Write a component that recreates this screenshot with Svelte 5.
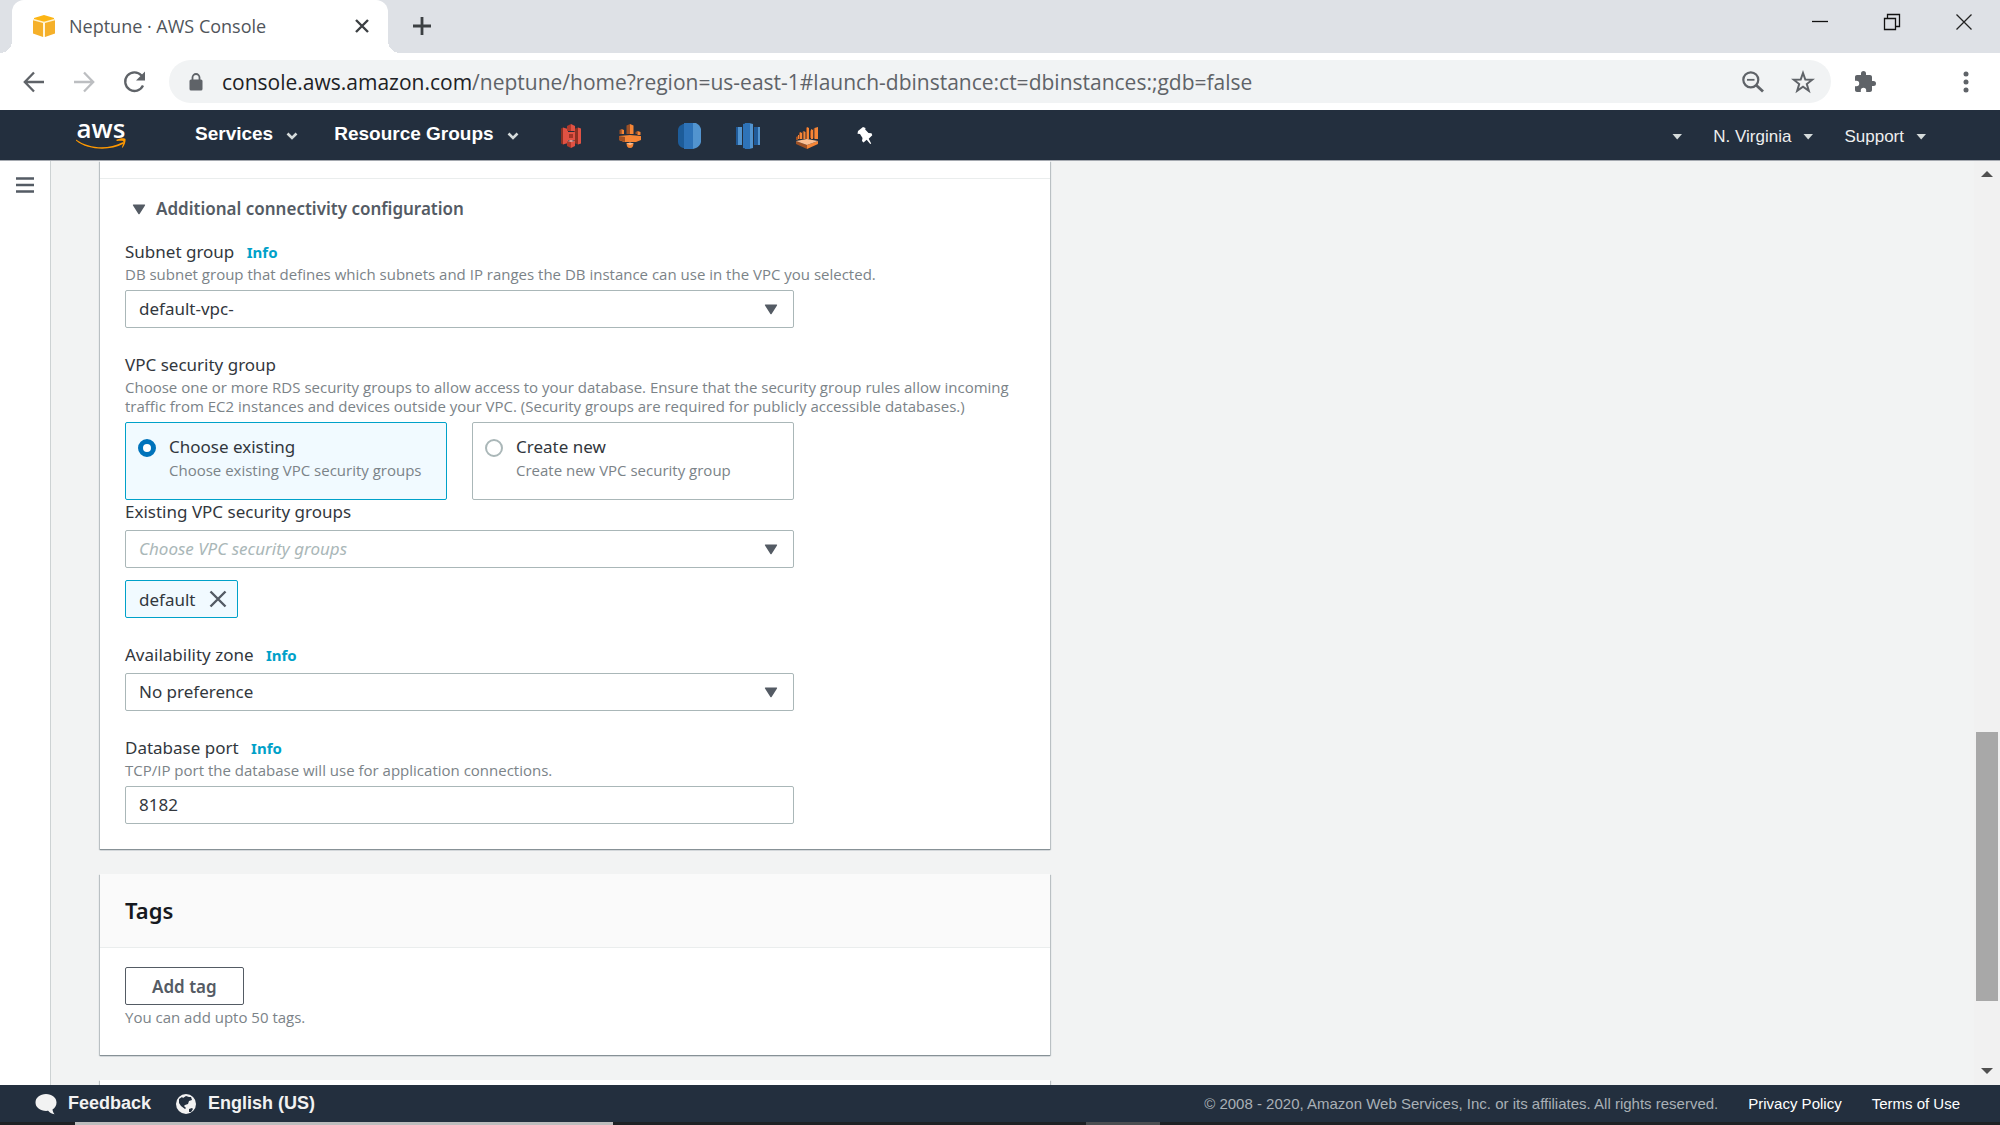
<script lang="ts">
  let subnetGroup = $state('default-vpc-');
  let groupMode = $state('existing');
  let securityGroup = $state('');
  let zone = $state('No preference');
  let port = $state('8182');
  let tokens = $state(['default']);

  const modes = [
    { value: 'existing', title: 'Choose existing', text: 'Choose existing VPC security groups' },
    { value: 'new', title: 'Create new', text: 'Create new VPC security group' }
  ];

  function removeToken(name: string) {
    tokens = tokens.filter((t) => t !== name);
  }
</script>

{#snippet caret()}
  <svg class="caret" width="12" height="8" viewBox="0 0 12 8"><path d="M1.500 1h9.500L6.200 6.500z" fill="#d5dbdb" /></svg>
{/snippet}

{#snippet chevron()}
  <svg class="chevron" width="12" height="8" viewBox="0 0 12 8"><path d="M1.500 1.500l4.500 4.500 4.500-4.500" fill="none" stroke="#d5dbdb" stroke-width="2.600" /></svg>
{/snippet}

{#snippet arrow()}
  <svg class="arrow" width="14" height="11" viewBox="0 0 14 11"><path d="M1.500.5h11a.6.6 0 0 1 .5 1L7.600 10a.8.8 0 0 1-1.200 0L1 1.500a.6.6 0 0 1 .5-1z" fill="#545b64" /></svg>
{/snippet}

<div class="window">
  <div class="tab-strip">
    <div class="tab">
      <svg width="24" height="24" viewBox="0 0 24 24">
        <path d="M12 1l10 3v2l-10 2.500L2 6V4z" fill="#fcb514" />
        <path d="M1 5l10 3.500V23L1 19.500zM23 5L13 8.500V23l10-3.500z" fill="#f5b02a" />
        <path d="M1 5.500l11 3 11-3M12 8.500V23" fill="none" stroke="#fff2cf" stroke-width="1.500" />
      </svg>
      <span class="tab-title">Neptune · AWS Console</span>
      <button aria-label="Close tab">
        <svg width="16" height="16" viewBox="0 0 16 16"><path d="M2 2l12 12M14 2L2 14" stroke="#3c4043" stroke-width="2.400" /></svg>
      </button>
    </div>
    <button class="new-tab" aria-label="New tab">
      <svg width="20" height="20" viewBox="0 0 20 20"><path d="M10 1v18M1 10h18" stroke="#3c4043" stroke-width="2.800" /></svg>
    </button>
    <div class="window-buttons">
      <button aria-label="Minimize">
        <svg width="18" height="18" viewBox="0 0 18 18"><path d="M1 8.500h16" stroke="#111" stroke-width="1.300" /></svg>
      </button>
      <button aria-label="Restore">
        <svg width="18" height="18" viewBox="0 0 18 18"><path d="M1.500 5.500h11v11h-11zM4.500 5V1.500h12v12H13" fill="none" stroke="#111" stroke-width="1.300" /></svg>
      </button>
      <button aria-label="Close">
        <svg width="18" height="18" viewBox="0 0 18 18"><path d="M1.500 1.500l15 15M16.500 1.500l-15 15" stroke="#222" stroke-width="1.300" /></svg>
      </button>
    </div>
  </div>

  <div class="toolbar">
    <button aria-label="Back">
      <svg width="22" height="22" viewBox="0 0 22 22"><path d="M21 11H2M11 1.500L1.800 11l9.200 9.500" fill="none" stroke="#5f6368" stroke-width="2.300" /></svg>
    </button>
    <button aria-label="Forward">
      <svg width="22" height="22" viewBox="0 0 22 22"><path d="M1 11h19M11 1.500l9.200 9.500-9.200 9.500" fill="none" stroke="#bcbec1" stroke-width="2.300" /></svg>
    </button>
    <button aria-label="Reload">
      <svg width="24" height="24" viewBox="0 0 24 24">
        <path d="M20 15.500A9.300 9.300 0 1 1 18.500 5.500l1.500 1.800" fill="none" stroke="#5f6368" stroke-width="2.300" />
        <path d="M22 1.500v9h-9z" fill="#5f6368" />
      </svg>
    </button>
    <div class="address">
      <svg width="14" height="18" viewBox="0 0 14 18">
        <path d="M3.500 8V4.500a3.500 3.500 0 0 1 7 0V8" fill="none" stroke="#5f6368" stroke-width="1.800" />
        <rect x="0.500" y="6.500" width="13" height="11" rx="1.500" fill="#5f6368" />
      </svg>
      <span class="url"><b>console.aws.amazon.com</b>/neptune/home?region=us-east-1#launch-dbinstance:ct=dbinstances:;gdb=false</span>
      <button aria-label="Zoom">
        <svg width="22" height="22" viewBox="0 0 22 22">
          <circle cx="8.800" cy="8.800" r="7.500" fill="none" stroke="#5f6368" stroke-width="2.200" />
          <path d="M5 8.800h7.500" stroke="#5f6368" stroke-width="1.800" />
          <path d="M14 14l7 6.500" stroke="#5f6368" stroke-width="2.800" />
        </svg>
      </button>
      <button aria-label="Bookmark">
        <svg width="24" height="24" viewBox="0 0 24 24"><path d="M12 3l2.300 6.500 7 .2-5.500 4.300 2 6.700-5.800-4-5.800 4 2-6.700L2.700 9.700l7-.2z" fill="none" stroke="#5f6368" stroke-width="2" /></svg>
      </button>
    </div>
    <button aria-label="Extensions">
      <svg width="24" height="24" viewBox="0 0 24 24"><path d="M20.500 11H19V7c0-1.100-.9-2-2-2h-4V3.500a2.500 2.500 0 0 0-5 0V5H4c-1.100 0-2 .9-2 2v3.800h1.500a2.700 2.700 0 0 1 0 5.400H2V20c0 1.100.9 2 2 2h3.800v-1.500a2.700 2.700 0 0 1 5.400 0V22H17c1.100 0 2-.9 2-2v-4h1.500a2.500 2.500 0 0 0 0-5z" fill="#5f6368" /></svg>
    </button>
    <button class="menu-dots" aria-label="Browser menu">
      <svg width="8" height="22" viewBox="0 0 8 22"><g fill="#5f6368"><circle cx="4" cy="3" r="2.500" /><circle cx="4" cy="11" r="2.500" /><circle cx="4" cy="19" r="2.500" /></g></svg>
    </button>
  </div>

  <nav class="console-nav">
    <a class="logo" href="#home" aria-label="AWS">
      <span>aws</span>
      <svg width="50" height="12" viewBox="0 0 50 12">
        <path d="M0 1.500C13 11 33 11.500 46 4.500c1.500-.6 2.300.4 1 1.600C34 13 12 12.500.2 2.800-.5 2-.1 1.400 0 1.500z" fill="#ff9900" />
        <path d="M40.500 1.800C43 .2 48.500-.2 49.300.8c.8 1-.2 6.400-2.600 8.700-.5.4-1 .1-.7-.5.7-1.700 1.700-5 1.200-5.800-.5-.8-4-.5-5.900-.3-.9.100-1.100-.6-.8-1.100z" fill="#ff9900" />
      </svg>
    </a>
    <button class="main-item">Services {@render chevron()}</button>
    <button class="main-item">Resource Groups {@render chevron()}</button>
    <div class="shortcuts">
      <a href="#s3" aria-label="S3">
        <svg width="26" height="26" viewBox="0 0 26 26">
          <path d="M3 5.500L5 4.500v17L3 20.500z" fill="#8c3123" /><path d="M5 4.500l5 1.500v14l-5 1.500z" fill="#e05243" />
          <path d="M23 5.500l-3-1v17l3-1z" fill="#e05243" /><path d="M20 4.500L16 6v14l4 1.500z" fill="#8c3123" />
          <path d="M13 1l-4 2v5h4z" fill="#b0392b" /><path d="M13 1l4 2v5h-4z" fill="#e05243" />
          <path d="M9 9h8v8H9z" fill="#e05243" /><path d="M11 11h4v4h-4z" fill="#a33426" />
          <path d="M9 18l4 1v6l-4-2z" fill="#b0392b" /><path d="M17 18l-4 1v6l4-2z" fill="#e05243" />
          <path d="M9 18l4-1 4 1-4 1z" fill="#f2a59c" />
        </svg>
      </a>
      <a href="#emr" aria-label="EMR">
        <svg width="26" height="26" viewBox="0 0 26 26">
          <path d="M2 13l11-1 11 1v4l-5 2H7l-5-2z" fill="#f58536" /><path d="M2 13l6 1v5l-6-2z" fill="#9d5025" />
          <path d="M9.500 2.500L13 1v10H9.500z" fill="#9d5025" /><path d="M13 1l3.500 1.500V11H13z" fill="#f58536" />
          <path d="M2.500 7L4.500 6v5h-2zM18.500 9l2-1v3h-2z" fill="#9d5025" /><path d="M4.500 6l2.500 1v4H4.500zM20.500 8l3 1v3h-3z" fill="#f58536" />
          <path d="M9.500 20h7c0 3-1 5-3.500 5s-3.500-2-3.500-5z" fill="#f58536" /><path d="M9.500 20.500l3.500-1 3.500 1-3.500 1.500z" fill="#fbbf93" />
        </svg>
      </a>
      <a href="#rds" aria-label="RDS">
        <svg width="26" height="26" viewBox="0 0 26 26">
          <path d="M8 1H7Q2 3 2 7v12q0 4 5 6h1z" fill="#1d5c99" /><path d="M8 0h9v26H8z" fill="#2e73b8" />
          <path d="M17 0h3q4 2 5 6v13q-1 4-5 6l-3 1z" fill="#5294cf" />
        </svg>
      </a>
      <a href="#redshift" aria-label="Redshift">
        <svg width="26" height="26" viewBox="0 0 26 26">
          <path d="M1 4h2v18H1zM19 4h4v18h-4z" fill="#205b99" /><path d="M3 4h4v18H3zM23 4h2v18h-2z" fill="#5294cf" />
          <path d="M8 1l5-1v26l-5-1z" fill="#2e73b8" /><path d="M14 0l4 1v24l-4 1z" fill="#5294cf" /><path d="M10 0h5v26h-5z" fill="#2e73b8" />
        </svg>
      </a>
      <a href="#quicksight" aria-label="Kinesis">
        <svg width="26" height="26" viewBox="0 0 26 26">
          <path d="M2 14l2-1v4H2zM5 10l1-1v7H5zM8.500 9l1-1v8h-1zM12 5l1-1v12h-1zM16 8l1-1v8h-1zM19.500 6l1-1v10h-1z" fill="#9d5025" />
          <path d="M4 12h1v4H4zM6 9l2 1v6H6zM9.500 8l2 1v7h-2zM13 4l2 1v11h-2zM17 6l2 1v9h-2zM20.500 5L24 4v12h-3.500z" fill="#f58536" />
          <path d="M2 18l11 4v4L2 21z" fill="#9d5025" /><path d="M13 22l11-4v3l-11 5z" fill="#f58536" /><path d="M2 18l11-2 11 2-11 4z" fill="#fbbf93" />
        </svg>
      </a>
      <button aria-label="Edit shortcuts">
        <svg width="26" height="26" viewBox="0 0 26 26"><path d="M5 8l5-4 2.500 1-.3 1.500 3.300 3.500 3 .2.800 2-3.600 3.500 2.500 4.800-1 .5-3.500-4.200-3.200 2.700-1.500-1.500.5-3-2.500-4-2.500-.3z" fill="#fff" /></svg>
      </button>
    </div>
    <div class="account">
      <button aria-label="Account">{@render caret()}</button>
      <button>N. Virginia {@render caret()}</button>
      <button>Support {@render caret()}</button>
    </div>
  </nav>

  <div class="body">
    <aside>
      <button aria-label="Open navigation">
        <svg width="20" height="18" viewBox="0 0 20 18"><path d="M1 2.500h18M1 9h18M1 15.500h18" stroke="#545b64" stroke-width="2.400" /></svg>
      </button>
    </aside>

    <main>
      <section class="card connectivity">
        <div class="fields">
          <button class="expander">{@render arrow()} Additional connectivity configuration</button>

          <div class="field">
            <div class="label"><label for="subnet">Subnet group</label> <a href="#info">Info</a></div>
            <p>DB subnet group that defines which subnets and IP ranges the DB instance can use in the VPC you selected.</p>
            <div class="select">
              <select id="subnet" bind:value={subnetGroup}>
                <option>default-vpc-</option>
              </select>
              {@render arrow()}
            </div>
          </div>

          <div class="field" role="radiogroup" aria-labelledby="vpc-label">
            <div class="label" id="vpc-label">VPC security group</div>
            <p>Choose one or more RDS security groups to allow access to your database. Ensure that the security group rules allow incoming traffic from EC2 instances and devices outside your VPC. (Security groups are required for publicly accessible databases.)</p>
            <div class="tiles">
              {#each modes as mode}
                <label class="tile" class:selected={groupMode === mode.value}>
                  <input type="radio" name="mode" value={mode.value} bind:group={groupMode} />
                  <span>
                    <span class="tile-title">{mode.title}</span>
                    <small>{mode.text}</small>
                  </span>
                </label>
              {/each}
            </div>
            <div class="label"><label for="groups">Existing VPC security groups</label></div>
            <div class="select">
              <select id="groups" class:placeholder={securityGroup === ''} bind:value={securityGroup}>
                <option value="">Choose VPC security groups</option>
              </select>
              {@render arrow()}
            </div>
            <div class="tokens">
              {#each tokens as token}
                <span class="token">
                  {token}
                  <button aria-label="Remove {token}" onclick={() => removeToken(token)}>
                    <svg width="18" height="18" viewBox="0 0 18 18"><path d="M1.500 1.500l15 15M16.500 1.500l-15 15" stroke="#545b64" stroke-width="2.400" /></svg>
                  </button>
                </span>
              {/each}
            </div>
          </div>

          <div class="field">
            <div class="label"><label for="zone">Availability zone</label> <a href="#info">Info</a></div>
            <div class="select">
              <select id="zone" bind:value={zone}>
                <option>No preference</option>
              </select>
              {@render arrow()}
            </div>
          </div>

          <div class="field">
            <div class="label"><label for="port">Database port</label> <a href="#info">Info</a></div>
            <p>TCP/IP port the database will use for application connections.</p>
            <input id="port" class="text-input" type="text" bind:value={port} />
          </div>
        </div>
      </section>

      <section class="card">
        <h2>Tags</h2>
        <div class="tags">
          <button class="add-tag">Add tag</button>
          <p>You can add upto 50 tags.</p>
        </div>
      </section>

      <section class="card next"></section>
    </main>

    <div class="scrollbar">
      <svg width="12" height="26" viewBox="0 0 12 26"><path d="M0 16l6-6 6 6z" fill="#505050" /></svg>
      <div class="track"><div class="thumb"></div></div>
      <svg width="12" height="26" viewBox="0 0 12 26"><path d="M0 9h12l-6 6z" fill="#505050" /></svg>
    </div>
  </div>

  <footer>
    <button class="footer-item">
      <svg width="22" height="22" viewBox="0 0 22 22"><path d="M11 1c6 0 10.500 3.600 10.500 8.500 0 3-1.500 5.500-4 7 .3 2 1 3.500 2 4.800-3-.4-5-1.800-6.300-3.500-7 .8-12.700-2.800-12.700-8.300C.5 4.600 5 1 11 1z" fill="#f2f2f2" /></svg>
      Feedback
    </button>
    <button class="footer-item">
      <svg width="22" height="22" viewBox="0 0 22 22">
        <circle cx="11" cy="11" r="10" fill="#f2f2f2" />
        <path d="M4 6l3-2 1 1 3-2 3 1 2 0 1 3-3 1-1 3-3 1-1 1 2 2-1 1-4-3-2-3zM14 16l3-1 1 1-2 3-2 0z" fill="#232f3e" />
      </svg>
      English (US)
    </button>
    <span class="copyright">© 2008 - 2020, Amazon Web Services, Inc. or its affiliates. All rights reserved.</span>
    <a href="#privacy">Privacy Policy</a>
    <a href="#terms">Terms of Use</a>
  </footer>
  <div class="taskbar"><span class="search"></span><span class="running"></span></div>
</div>

<style>
  :global(body) {
    margin: 0;
  }

  .window {
    height: 100vh;
    display: flex;
    flex-direction: column;
    overflow: hidden;
    font-family: "Noto Sans", "Open Sans", sans-serif;
    color: #32373d;
  }

  button {
    padding: 0;
    border: 0;
    background: none;
    font: inherit;
    color: inherit;
    display: flex;
    align-items: center;
    justify-content: center;
  }

  a {
    color: inherit;
    text-decoration: none;
  }

  svg {
    display: block;
    flex: none;
  }

  .tab-strip {
    display: flex;
    height: 53px;
    flex: none;
    padding-left: 12px;
    background: #dee1e6;
  }

  .tab {
    position: relative;
    display: flex;
    align-items: center;
    width: 338px;
    padding: 0 18px 2px 20px;
    border-radius: 12px 12px 0 0;
    background: #fff;
    font-family: "Open Sans", sans-serif;
    font-size: 18px;
    color: #50555b;
  }

  /* flared feet of the active tab */
  .tab::before,
  .tab::after {
    content: '';
    position: absolute;
    bottom: 0;
    width: 12px;
    height: 12px;
  }

  .tab::before {
    left: -12px;
    background: radial-gradient(circle at 0 0, #dee1e6 12px, #fff 12px);
  }

  .tab::after {
    right: -12px;
    background: radial-gradient(circle at 100% 0, #dee1e6 12px, #fff 12px);
  }

  .tab-title {
    flex: 1;
    margin-left: 13px;
    white-space: nowrap;
  }

  .new-tab {
    margin-left: 24px;
    padding-bottom: 2px;
  }

  .window-buttons {
    display: flex;
    gap: 54px;
    height: 44px;
    margin-left: auto;
    padding-right: 27px;
  }

  .toolbar {
    display: flex;
    align-items: center;
    gap: 28px;
    flex: none;
    height: 57px;
    padding: 0 30px 0 23px;
    background: #fff;
  }

  .address {
    flex: 1;
    display: flex;
    align-items: center;
    gap: 27px;
    height: 43px;
    margin: 0 -6px 0 -6px;
    padding: 0 16px 0 20px;
    border-radius: 22px;
    background: #f1f3f4;
  }

  .url {
    flex: 1;
    margin-left: -8px;
    font-family: "Open Sans", sans-serif;
    font-size: 21px;
    color: #5f6368;
    white-space: nowrap;
  }

  .url b {
    font-weight: 400;
    color: #202124;
  }

  .menu-dots {
    margin-left: 57px;
  }

  .console-nav {
    display: flex;
    align-items: center;
    flex: none;
    height: 51px;
    padding: 0 73px 0 76px;
    background: #232f3e;
    border-bottom: 1px solid #a5a9b0;
    box-sizing: border-box;
    font-family: "Liberation Sans", Arial, sans-serif;
    color: #fff;
  }

  .logo {
    display: flex;
    flex-direction: column;
    align-items: center;
    width: 50px;
    margin-right: 69px;
    padding-bottom: 2px;
  }

  .logo span {
    font-family: "Open Sans", sans-serif;
    font-size: 26px;
    font-weight: 600;
    line-height: 20px;
  }

  .main-item {
    gap: 13px;
    margin-right: 36px;
    padding-bottom: 2px;
    font-size: 19px;
    font-weight: 700;
  }

  .chevron {
    margin-top: 4px;
  }

  .shortcuts {
    display: flex;
    gap: 33px;
    margin: 1px 0 0 3px;
  }

  .account {
    display: flex;
    gap: 30px;
    margin: 4px 0 0 auto;
    font-size: 17px;
    color: #eee;
  }

  .account button {
    gap: 11px;
  }

  .body {
    flex: 1;
    display: flex;
    min-height: 0;
    background: #f2f3f3;
  }

  aside {
    flex: none;
    width: 50px;
    background: #fff;
    border-right: 1px solid #cdd2d3;
  }

  aside button {
    margin: 15px 0 0 15px;
  }

  main {
    flex: 1;
    min-width: 0;
    padding-left: 49px;
    overflow: hidden;
  }

  .card {
    max-width: 950px;
    margin-bottom: 25px;
    background: #fff;
    box-shadow: 0 1px 1px 0 #879196, 1px 1px 1px 0 #c5cbcd, -1px 1px 1px 0 #c5cbcd;
  }

  .connectivity {
    padding-top: 17px;
  }

  .fields {
    padding: 18px 25px 25px;
    border-top: 1px solid #eaeded;
  }

  .expander {
    gap: 10px;
    margin: 0 0 19px 7px;
    font-size: 17px;
    font-weight: 600;
    line-height: 24px;
    color: #545b64;
  }

  .field + .field {
    margin-top: 25px;
  }

  .label {
    font-size: 17px;
    line-height: 24px;
  }

  .label a {
    margin-left: 8px;
    font-size: 15px;
    font-weight: 700;
    color: #00a1c9;
  }

  p,
  small {
    font-family: "Open Sans", "Noto Sans", sans-serif;
    font-size: 15px;
    color: #7b8388;
  }

  p {
    margin: 1px 0 0;
    line-height: 19px;
  }

  .select,
  .tiles,
  .text-input {
    max-width: 669px;
    margin-top: 6px;
  }

  .select {
    position: relative;
  }

  select,
  .text-input {
    display: block;
    width: 100%;
    height: 38px;
    padding: 0 13px 2px;
    border: 1px solid #aab7b8;
    border-radius: 2px;
    box-sizing: border-box;
    background: #fff;
    font: inherit;
    font-size: 17px;
    color: #32373d;
    appearance: none;
  }

  select.placeholder {
    font-style: italic;
    color: #aab7b8;
  }

  .select :global(.arrow) {
    position: absolute;
    top: 14px;
    right: 16px;
    pointer-events: none;
  }

  .tiles {
    display: grid;
    grid-template-columns: 1fr 1fr;
    gap: 25px;
  }

  .tile {
    display: flex;
    gap: 13px;
    min-height: 78px;
    padding: 12px;
    border: 1px solid #aab7b8;
    border-radius: 2px;
    box-sizing: border-box;
  }

  .tile.selected {
    border-color: #00a1c9;
    background: #f1faff;
  }

  .tile input {
    flex: none;
    appearance: none;
    width: 18px;
    height: 18px;
    margin: 4px 0 0;
    border: 2px solid #aab7b8;
    border-radius: 50%;
    box-sizing: border-box;
    background: #fff;
  }

  .tile input:checked {
    border: 5px solid #0073bb;
  }

  .tile-title {
    display: block;
    font-size: 17px;
    line-height: 24px;
  }

  small {
    display: block;
    line-height: 22px;
  }

  .tokens {
    display: flex;
    gap: 12px;
    margin-top: 12px;
  }

  .token {
    display: flex;
    align-items: center;
    gap: 14px;
    height: 38px;
    padding: 0 10px 0 13px;
    border: 1px solid #00a1c9;
    border-radius: 2px;
    box-sizing: border-box;
    background: #f1faff;
    font-size: 17px;
  }

  h2 {
    margin: 0;
    padding: 22px 25px;
    border-bottom: 1px solid #eaeded;
    background: #fafafa;
    font-size: 22px;
    font-weight: 600;
    line-height: 29px;
    color: #16191f;
  }

  .tags {
    padding: 19px 25px 28px;
  }

  .add-tag {
    height: 38px;
    padding: 0 26px;
    border: 1px solid #545b64;
    border-radius: 2px;
    font-size: 17px;
    font-weight: 600;
    color: #545b64;
  }

  .tags p {
    margin-top: 3px;
  }

  .next {
    height: 40px;
  }

  .scrollbar {
    flex: none;
    display: flex;
    flex-direction: column;
    align-items: center;
    width: 26px;
    background: #f1f1f1;
  }

  .track {
    flex: 1;
    display: flex;
    align-items: flex-end;
    width: 22px;
    padding-bottom: 58px;
  }

  .thumb {
    width: 100%;
    height: 33%;
    background: #a8a8a8;
  }

  footer {
    display: flex;
    align-items: center;
    flex: none;
    height: 37px;
    padding: 0 40px 0 35px;
    background: #232f3e;
    font-family: "Liberation Sans", Arial, sans-serif;
    font-size: 15px;
    color: #fff;
  }

  .footer-item {
    gap: 11px;
    margin-right: 24px;
    font-size: 18px;
    font-weight: 700;
    color: #f2f2f2;
  }

  .copyright {
    margin-left: auto;
    color: #a9b0b6;
  }

  footer a {
    margin-left: 30px;
  }

  .taskbar {
    display: flex;
    justify-content: space-between;
    flex: none;
    height: 3px;
    padding: 0 42% 0 75px;
    background: #1e2124;
  }

  .search {
    width: 538px;
    background: #bdbdbd;
  }

  .running {
    width: 74px;
    background: #4b4e51;
  }
</style>
